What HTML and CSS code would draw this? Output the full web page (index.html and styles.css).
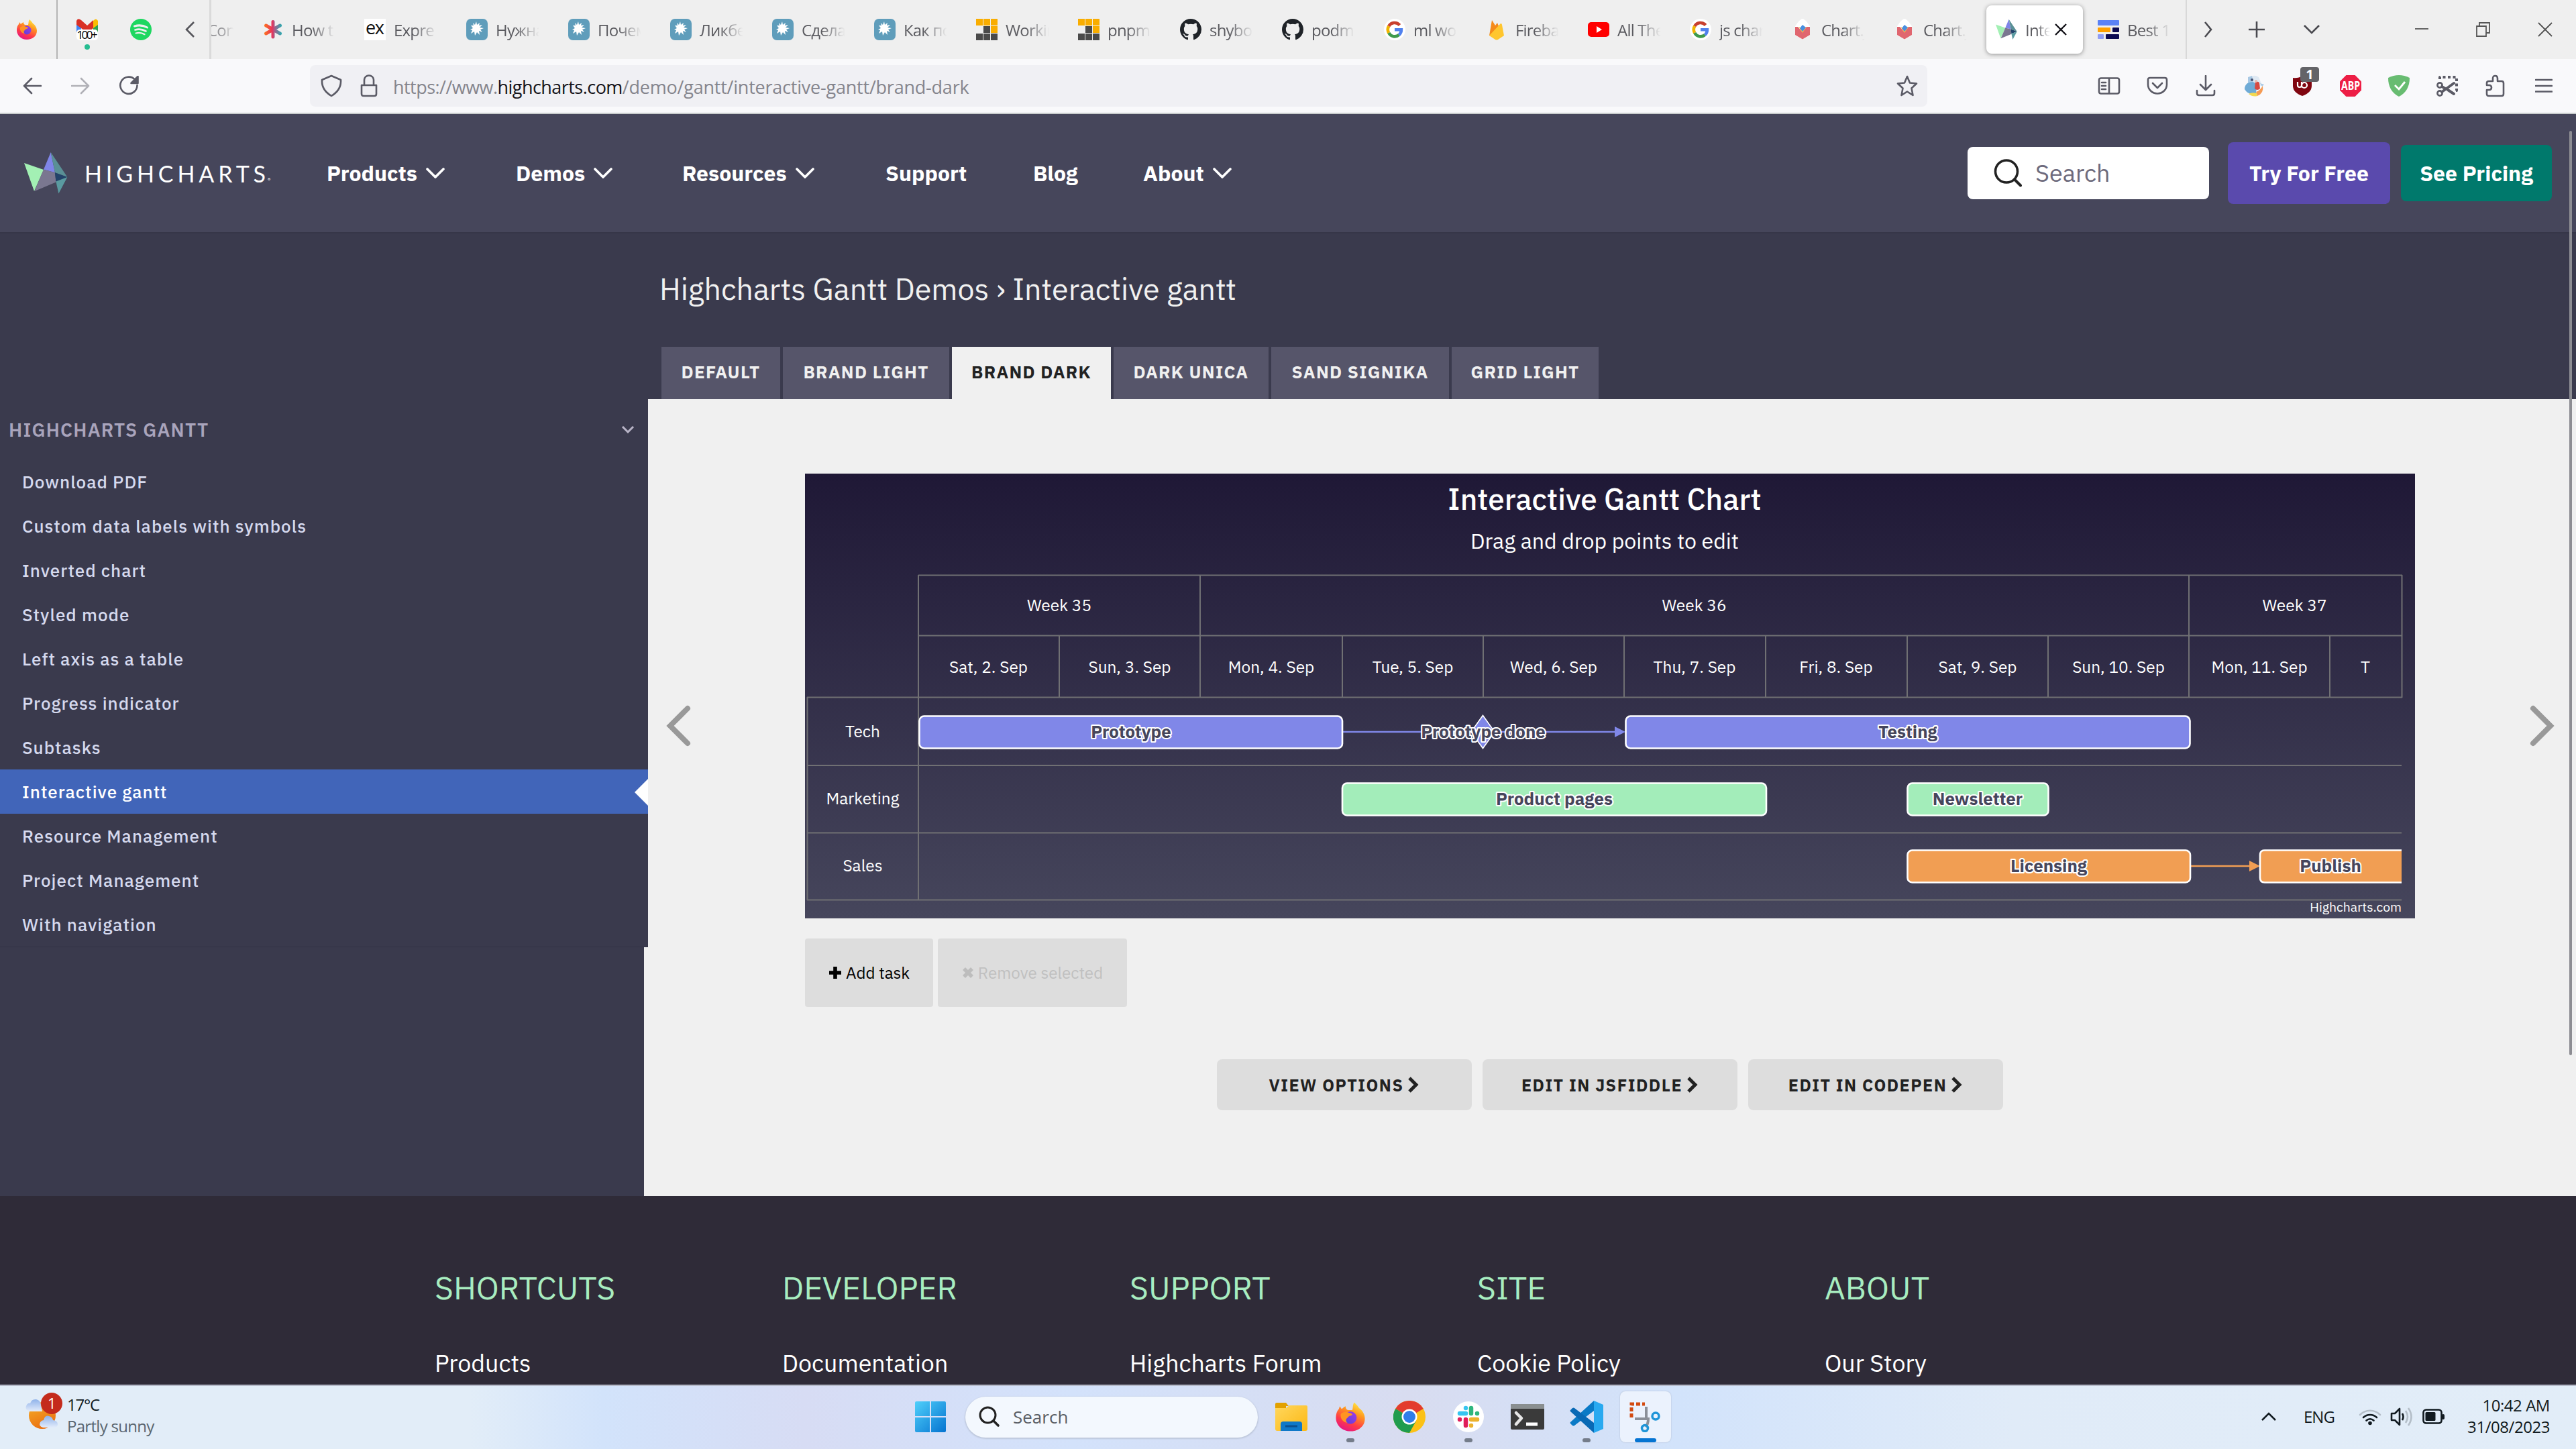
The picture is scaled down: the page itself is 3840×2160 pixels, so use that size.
FILE: index.html
```html
<!DOCTYPE html>
<html lang="en">
<head>
<meta charset="utf-8">
<title>Interactive gantt</title>
<link rel="stylesheet" href="styles.css">
</head>
<body>
<svg class="defs" aria-hidden="true">
  <defs>
    <linearGradient id="foxBody" x1="0.8" y1="0" x2="0.3" y2="1">
      <stop offset="0" stop-color="#fff14a"/><stop offset="0.35" stop-color="#ff9a1f"/><stop offset="0.7" stop-color="#ff3b47"/><stop offset="1" stop-color="#e31587"/>
    </linearGradient>
    <linearGradient id="foxGlobe" x1="0" y1="1" x2="1" y2="0">
      <stop offset="0" stop-color="#5a3fd6"/><stop offset="1" stop-color="#a23be8"/>
    </linearGradient>
    <linearGradient id="winFill" x1="0" y1="0" x2="1" y2="1">
      <stop offset="0" stop-color="#4fd0fb"/><stop offset="1" stop-color="#0573d0"/>
    </linearGradient>
    <linearGradient id="folderFill" x1="0" y1="0" x2="1" y2="1">
      <stop offset="0" stop-color="#ffd75e"/><stop offset="1" stop-color="#fcb813"/>
    </linearGradient>
    <linearGradient id="starFill" gradientUnits="userSpaceOnUse" x1="2" y1="0" x2="30" y2="0">
      <stop offset="0" stop-color="#ff7a1a"/><stop offset="0.45" stop-color="#e8335a"/><stop offset="0.6" stop-color="#a0608c"/><stop offset="1" stop-color="#1fb5b5"/>
    </linearGradient>
    <linearGradient id="sunFill" x1="0" y1="0" x2="0.4" y2="1">
      <stop offset="0" stop-color="#f6b02c"/><stop offset="1" stop-color="#ea7211"/>
    </linearGradient>
    <linearGradient id="cloudFill" x1="0" y1="0" x2="0" y2="1">
      <stop offset="0" stop-color="#8fb2ea"/><stop offset="1" stop-color="#e3ecfb"/>
    </linearGradient>
  </defs>
  <symbol id="firefox" viewBox="0 0 32 32">
    <path fill="url(#foxBody)" d="M20 1c2 2 4 4 5 6 3 2 6 6 6 11 0 8-7 13-15 13S1 25 1 17c0-4 1-7 3-9l1-3 2 3c1-1 2-2 4-3 0 2 1 4 3 4h4c1-3 0-5 2-8z"/>
    <circle cx="16" cy="17" r="6.500" fill="url(#foxGlobe)"/>
    <path fill="#ff9422" d="M6 13c3-3 7-2 9-1 2 0 3 1 3 2-2 1-4 1-5 3-2 1-2 4 0 5-4 0-8-4-7-9z"/>
  </symbol>
  <symbol id="habr" viewBox="0 0 32 32">
    <rect width="32" height="32" rx="7" fill="#5f9dbb"/>
    <path fill="#fff" d="M15 4l1 5 4-3-1 4 5-1-4 4 6 1-5 2 3 4-5-2 1 6-4-4-3 5-1-6-5 3 2-5-3-1 4-2-3-4 4 0-1-4 3 3z"/>
  </symbol>
  <symbol id="pnpm" viewBox="0 0 32 32">
    <path fill="#f9ad00" d="M0 0h10v10H0zM11 0h10v10H11zM22 0h10v10H22zM22 11h10v10H22z"/>
    <path fill="#4a4a4a" d="M11 11h10v10H11zM0 22h10v10H0zM11 22h10v10H11zM22 22h10v10H22z"/>
  </symbol>
  <symbol id="github" viewBox="0 0 16 16">
    <path fill="#1f2328" d="M8 0C3.58 0 0 3.58 0 8c0 3.54 2.29 6.53 5.47 7.59.4.07.55-.17.55-.38 0-.19-.01-.82-.01-1.49-2.01.37-2.53-.49-2.69-.94-.09-.23-.48-.94-.82-1.13-.28-.15-.68-.52-.01-.53.63-.01 1.08.58 1.23.82.72 1.21 1.87.87 2.33.66.07-.52.28-.87.51-1.07-1.78-.2-3.64-.89-3.64-3.95 0-.87.31-1.59.82-2.15-.08-.2-.36-1.02.08-2.12 0 0 .67-.21 2.2.82a7.6 7.6 0 0 1 4 0c1.53-1.04 2.2-.82 2.2-.82.44 1.1.16 1.92.08 2.12.51.56.82 1.27.82 2.15 0 3.07-1.87 3.75-3.65 3.95.29.25.54.73.54 1.48 0 1.07-.01 1.93-.01 2.2 0 .21.15.46.55.38A8 8 0 0 0 16 8c0-4.42-3.58-8-8-8z"/>
  </symbol>
  <symbol id="google" viewBox="0 0 32 32">
    <circle cx="16" cy="16" r="16" fill="#fff"/>
    <g fill="none" stroke-width="4.600">
      <path stroke="#c8402f" d="M23.500 9.500A10 10 0 0 0 7.200 11"/>
      <path stroke="#f0b400" d="M7.200 11a10 10 0 0 0 0 10"/>
      <path stroke="#3f9a4c" d="M7.200 21a10 10 0 0 0 15.300 3"/>
      <path stroke="#5081ee" d="M22.500 24a10 10 0 0 0 3.400-7.700H16"/>
    </g>
  </symbol>
  <symbol id="chartjs" viewBox="0 0 32 32">
    <path fill="#fff" d="M16-1l6 5 5 7v13l-11 7-11-7V11l5-7z"/>
    <path fill="#e0666f" d="M5 12h4l7 8 6-8h5v12l-11 6.500L5 24z"/>
    <path fill="#f6b53c" d="M10 12l6 9 6-9-3 1-3 2z"/>
    <path fill="#4a8fe0" d="M12 14l4-5 5 4-5 6z"/>
  </symbol>
  <symbol id="hcmark" viewBox="36 227 65 62">
    <path fill="#a3f0b4" d="M36 243l29 10-14 32z"/>
    <path fill="#7f85e8" d="M75.700 227L65 252.700l17 4.500z"/>
    <path fill="#5a9096" d="M75.700 227l24.700 37-18.400-6.800z"/>
    <path fill="#7a7790" d="M65 252.700l17 4.500 1.500 14.300L51.500 285z"/>
    <path fill="#22436a" d="M81.800 257.200l18.600 6.800-17 6.500z"/>
    <path fill="#5a9aa0" d="M100.400 264l-17 6.500 4 18z"/>
  </symbol>
  <symbol id="navchev" viewBox="0 0 30 18"><path fill="none" stroke="#fff" stroke-width="3.600" stroke-linecap="round" stroke-linejoin="round" d="M3 3l12 12L27 3"/></symbol>
  <symbol id="gochev" viewBox="0 0 18 24"><path fill="none" stroke="#222" stroke-width="5" d="M3 2l10 10L3 22"/></symbol>
</svg>

<div class="tabbar">
  <div class="pinned">
    <svg class="i32 pin-fox"><use href="#firefox"/></svg>
    <span class="pin-line"></span>
    <span class="pin-mail">
      <svg width="32" height="32" viewBox="0 0 32 32"><path fill="#4285f4" d="M0 6h7v20H0z"/><path fill="#2fa34f" d="M25 6h7v20h-7z"/><path fill="#fbbc04" d="M25 3q4-5 7 0v6l-7 5z"/><path fill="#d93025" d="M0 3q2-5 7-1l9 8 9-8v12l-9 7-9-7L0 9z"/><rect y="16" width="32" height="16" rx="5" fill="#fff"/><text x="16" y="30" text-anchor="middle" textLength="31" class="mailcount">100+</text></svg>
      <i class="mail-dot"></i>
    </span>
    <svg class="i32 pin-spot" viewBox="0 0 32 32"><circle cx="16" cy="16" r="16" fill="#1ed760"/><g fill="none" stroke="#efefef" stroke-linecap="round"><path stroke-width="3" d="M6.500 11q10-3 19 2"/><path stroke-width="2.600" d="M7.500 16.500q8-2.500 16 2"/><path stroke-width="2.200" d="M8.500 21.500q7-2 13 1.700"/></g></svg>
    <svg class="pin-prev" width="16" height="26" viewBox="0 0 16 26"><path fill="none" stroke="#55555b" stroke-width="2.600" d="M14 2L3 13l11 11"/></svg>
  </div>
  <div class="tabs">
    <div class="tab tab-cut"><span class="tab-label">Con</span></div>
    <div class="tab"><svg class="i32" viewBox="0 0 32 32"><g stroke="url(#starFill)" stroke-width="5" stroke-linecap="round"><path d="M16.010 4.500L16 27M5.500 10l21 12M5.500 22l21-12"/></g></svg><span class="tab-label">How t</span></div>
    <div class="tab"><svg class="i32" viewBox="0 0 32 32"><rect width="32" height="32" fill="#fff"/><text x="16" y="23" text-anchor="middle" textLength="28" class="exicon">ex</text></svg><span class="tab-label">Expre</span></div>
    <div class="tab"><svg class="i32"><use href="#habr"/></svg><span class="tab-label">Нужна</span></div>
    <div class="tab"><svg class="i32"><use href="#habr"/></svg><span class="tab-label">Почем</span></div>
    <div class="tab"><svg class="i32"><use href="#habr"/></svg><span class="tab-label">Ликбе</span></div>
    <div class="tab"><svg class="i32"><use href="#habr"/></svg><span class="tab-label">Сдела</span></div>
    <div class="tab"><svg class="i32"><use href="#habr"/></svg><span class="tab-label">Как по</span></div>
    <div class="tab"><svg class="i32"><use href="#pnpm"/></svg><span class="tab-label">Workin</span></div>
    <div class="tab"><svg class="i32"><use href="#pnpm"/></svg><span class="tab-label">pnpm</span></div>
    <div class="tab"><svg class="i32"><use href="#github"/></svg><span class="tab-label">shybo</span></div>
    <div class="tab"><svg class="i32"><use href="#github"/></svg><span class="tab-label">podm</span></div>
    <div class="tab"><svg class="i32"><use href="#google"/></svg><span class="tab-label">ml wo</span></div>
    <div class="tab"><svg class="i32" viewBox="0 0 32 32"><path fill="#f58a1a" d="M5 25L9 2l5 8 3-4 8 19z"/><path fill="#ffc62e" d="M5 25L22 7q2 0 2 2l3 16-9 6q-2 1-4 0z"/></svg><span class="tab-label">Fireba</span></div>
    <div class="tab"><svg class="i32" viewBox="0 0 32 32"><rect y="5" width="32" height="22" rx="5" fill="#f00"/><path fill="#fff" d="M13 11v10l8-5z"/></svg><span class="tab-label">All The</span></div>
    <div class="tab"><svg class="i32"><use href="#google"/></svg><span class="tab-label">js char</span></div>
    <div class="tab"><svg class="i32"><use href="#chartjs"/></svg><span class="tab-label">Chart.j</span></div>
    <div class="tab"><svg class="i32"><use href="#chartjs"/></svg><span class="tab-label">Chart.j</span></div>
    <div class="tab tab-active"><svg class="i32"><use href="#hcmark"/></svg><span class="tab-label">Inte</span><svg class="tab-x" viewBox="0 0 18 18"><path stroke="#15141a" stroke-width="2.400" d="M1 1l16 16M17 1L1 17"/></svg></div>
    <div class="tab"><svg class="i32" viewBox="0 0 32 32"><rect y="2" width="32" height="8" rx="1" fill="#5b82f5"/><rect y="13" width="19" height="7" rx="1" fill="#ffa000"/><rect x="22" y="13" width="10" height="7" rx="1" fill="#0c0a52"/><rect y="23" width="9" height="7" rx="1" fill="#8f9df5"/><rect x="12" y="23" width="20" height="7" rx="1" fill="#0c0a52"/></svg><span class="tab-label">Best 1</span></div>
  </div>
  <div class="winbtns">
    <svg width="14" height="26" viewBox="0 0 14 26"><path d="M2 2l9 11-9 11"/></svg>
    <svg width="26" height="26" viewBox="0 0 26 26"><path d="M13 1v24M1 13h24"/></svg>
    <svg width="26" height="16" viewBox="0 0 26 16"><path d="M2 2l11 11L24 2"/></svg>
    <span></span>
    <svg width="20" height="20" viewBox="0 0 20 20"><path class="thin" d="M0 9h20"/></svg>
    <svg width="22" height="22" viewBox="0 0 22 22"><path class="thin" d="M1 6h14v15H1zM5 6V1h15v15h-5"/></svg>
    <svg width="22" height="22" viewBox="0 0 22 22"><path class="thin" d="M1 1l20 20M21 1L1 21"/></svg>
  </div>
</div>

<div class="toolbar">
  <div class="navbtns">
    <svg width="28" height="26" viewBox="0 0 28 26"><path d="M27 13H2M13 2L2 13l11 11"/></svg>
    <svg class="off" width="28" height="26" viewBox="0 0 28 26"><path d="M1 13h25M15 2l11 11-11 11"/></svg>
    <svg width="30" height="30" viewBox="0 0 30 30"><path d="M24 5.500A12.600 12.600 0 1 0 27.500 14"/><path class="solid" d="M28.500 1v10h-10z"/></svg>
  </div>
  <div class="urlbar">
    <svg width="32" height="34" viewBox="0 0 32 34"><path d="M16 2L30 8q1 15-14 24Q1 23 2 8z"/></svg>
    <svg width="26" height="34" viewBox="0 0 26 34"><path d="M2 16h22v13q0 3-3 3H5q-3 0-3-3zM6 16V8a7 6.500 0 0 1 14 0v8"/></svg>
    <span class="url"><span>https://www.</span><b>highcharts.com</b><span class="url-path">/demo/gantt/interactive-gantt/brand-dark</span></span>
    <svg class="bookmark" width="32" height="32" viewBox="0 0 32 32"><path d="M16 2l4 9.500 10 1-7.500 7 2 10.500-8.500-5.500L7.500 30l2-10.500-7.500-7 10-1z"/></svg>
  </div>
  <div class="tools">
    <svg width="34" height="26" viewBox="0 0 34 26"><path d="M5 1.500h24q3 0 3 3v17q0 3-3 3H5q-3 0-3-3v-17q0-3 3-3zM17 2v22M6 8h6M6 13h6M6 18h6"/></svg>
    <svg width="32" height="28" viewBox="0 0 32 28"><path d="M5 2h22q3 0 3 3v7a14 13.500 0 0 1-28 0V5q0-3 3-3zM9 10l7 7 7-7"/></svg>
    <svg width="30" height="32" viewBox="0 0 30 32"><path d="M15 1v20M7 14l8 8 8-8M2 23v4q0 3 3 3h20q3 0 3-3v-4"/></svg>
    <svg class="plain" width="32" height="32" viewBox="0 0 32 32"><path fill="#dfe9f3" d="M12 2q6-3 11 1l5 12-8 3-12-6z"/><path fill="#6fabd6" d="M8 11q9-4 12 6l-1 10q-11 4-17-6 0-7 6-10z"/><path fill="#a9c9e4" d="M7 3l6-2 2 9-8 1zM25 12l6 2-3 3z"/><path fill="#d8483f" d="M18 11q5-3 6 1l1 8q-4 4-8 0z"/><path fill="#f59b54" d="M29 16q2 11-8 15l-2-6q6-2 10-9z"/><path fill="#f3d94f" d="M8 28q5-3 12-1l1 4q-7 2-13-3z"/><circle cx="13" cy="7" r="2" fill="#46506f"/><circle cx="19" cy="9" r="2" fill="#e8b9b0"/></svg>
    <span class="ublock"><svg class="plain" width="30" height="30" viewBox="0 0 30 30"><path fill="#800610" d="M1 3q8 1 14-3 6 4 14 3v12q0 10-14 15Q1 25 1 15z"/><path fill="none" stroke="#fff" stroke-width="2.200" d="M8 9v5q0 3 3 3t3-3V9M14 14a4 4 0 1 0 4-4q-3 0-4 4"/></svg><b>1</b></span>
    <svg class="plain" width="32" height="32" viewBox="0 0 32 32"><path fill="#ed1e45" d="M9.400 0h13.200L32 9.400v13.200L22.600 32H9.400L0 22.600V9.400z"/><text x="16" y="22" text-anchor="middle" textLength="28" lengthAdjust="spacingAndGlyphs" class="abp">ABP</text></svg>
    <svg class="plain" width="32" height="32" viewBox="0 0 32 32"><path fill="#68bc71" d="M16 0q8 0 16 4 0 20-16 28Q0 24 0 4q8-4 16-4z"/><path fill="none" stroke="#fff" stroke-width="2.800" d="M10 15l6 6 9-11"/></svg>
    <svg width="34" height="32" viewBox="0 0 34 32"><path class="dash" d="M6 6V3h25v20h-4"/><circle cx="6" cy="15" r="3.600"/><circle cx="6" cy="27" r="3.600"/><path class="fat" d="M9 25l18-13M9 17l5 3M18 22l9 6"/></svg>
    <svg width="30" height="34" viewBox="0 0 30 34"><path d="M5 10h6V6q0-4 3.500-4T18 6v4h6q3 0 3 3v16q0 3-3 3H5q-3 0-3-3v-6h3.500q3.500 0 3.500-3.500T5.500 16H2v-3q0-3 3-3z"/></svg>
    <svg width="26" height="22" viewBox="0 0 26 22"><path d="M1 2h24M1 11h24M1 19.500h24"/></svg>
  </div>
</div>

<header class="site-header">
  <div class="brand"><svg class="brand-mark"><use href="#hcmark"/></svg><span class="brand-name">HIGHCHARTS</span><small>®</small></div>
  <nav class="site-nav">
    <a>Products<svg><use href="#navchev"/></svg></a>
    <a>Demos<svg><use href="#navchev"/></svg></a>
    <a>Resources<svg><use href="#navchev"/></svg></a>
    <a>Support</a>
    <a>Blog</a>
    <a>About<svg><use href="#navchev"/></svg></a>
  </nav>
  <div class="site-cta">
    <div class="site-search"><svg width="42" height="42" viewBox="0 0 42 42"><circle cx="19" cy="18.500" r="16.500" fill="none" stroke="#222" stroke-width="3.600"/><path stroke="#222" stroke-width="4" stroke-linecap="round" d="M31 30.500l9 9"/></svg><span>Search</span></div>
    <a class="cta cta-try">Try For Free</a>
    <a class="cta cta-price">See Pricing</a>
  </div>
</header>

<main class="page">
  <aside class="sidebar">
    <div class="menu">
      <div class="menu-title"><span>HIGHCHARTS GANTT</span><svg width="20" height="12" viewBox="0 0 20 12"><path fill="none" stroke="#b9b5c8" stroke-width="3" d="M2 2l8 8 8-8"/></svg></div>
      <a class="item">Download PDF</a>
      <a class="item">Custom data labels with symbols</a>
      <a class="item">Inverted chart</a>
      <a class="item">Styled mode</a>
      <a class="item">Left axis as a table</a>
      <a class="item">Progress indicator</a>
      <a class="item">Subtasks</a>
      <a class="item current">Interactive gantt</a>
      <a class="item">Resource Management</a>
      <a class="item">Project Management</a>
      <a class="item">With navigation</a>
    </div>
  </aside>
  <section class="content">
    <div class="content-head">
      <h1>Highcharts Gantt Demos › Interactive gantt</h1>
      <div class="themes">
        <a class="t1">DEFAULT</a><a class="t2">BRAND LIGHT</a><a class="t3 on">BRAND DARK</a><a class="t4">DARK UNICA</a><a class="t5">SAND SIGNIKA</a><a class="t6">GRID LIGHT</a>
      </div>
    </div>
    <div class="demo">
      <svg class="arrow" width="37" height="62" viewBox="0 0 37 62"><path d="M32 5L6 31l26 26"/></svg>
      <svg class="gantt" width="2400" height="663" viewBox="1200 706 2400 663">
        <g class="head">
          <text x="2392" y="760" class="title">Interactive Gantt Chart</text>
          <text x="2392" y="818" class="subtitle">Drag and drop points to edit</text>
        </g>
        <path class="grid" d="M1369 857.500H3581M1369 947.500H3581M1203 1039.500H3581M1203 1141H3580M1203 1241.500H3580M1203 1341.500H3580M1369 857V1342M3580.500 857V1040M1203.500 1039V1342M1789 857V1039M3263 857V1039M1579 947V1039M2001 947V1039M2211 947V1039M2421 947V1039M2632 947V1039M2843 947V1039M3053 947V1039M3473 947V1039"/>
        <g class="axis">
          <text x="1579" y="911">Week 35</text><text x="2525.500" y="911">Week 36</text><text x="3420.500" y="911">Week 37</text>
          <text x="1473.500" y="1003">Sat, 2. Sep</text><text x="1684" y="1003">Sun, 3. Sep</text><text x="1895" y="1003">Mon, 4. Sep</text><text x="2106" y="1003">Tue, 5. Sep</text><text x="2316" y="1003">Wed, 6. Sep</text><text x="2526" y="1003">Thu, 7. Sep</text><text x="2737" y="1003">Fri, 8. Sep</text><text x="2948" y="1003">Sat, 9. Sep</text><text x="3158" y="1003">Sun, 10. Sep</text><text x="3368" y="1003">Mon, 11. Sep</text><text x="3526" y="1003">T</text>
          <text x="1286" y="1099">Tech</text><text x="1286" y="1199">Marketing</text><text x="1286" y="1299">Sales</text>
        </g>
        <path class="link tech" d="M2002 1091H2410"/><path class="tip tech" d="M2407 1083l16 8-16 8z"/>
        <path class="link sales" d="M3266 1291H3356"/><path class="tip sales" d="M3353 1283l16 8-16 8z"/>
        <g class="bars">
          <rect class="tech" x="1370.500" y="1067.500" width="630.500" height="48" rx="7"/>
          <rect class="tech" x="2423.500" y="1067.500" width="841" height="48" rx="7"/>
          <path class="tech thin" d="M2210.500 1066.500l17.500 24.500-17.500 24.500-17.500-24.500z"/>
          <rect class="mkt" x="2001" y="1167.500" width="632" height="48" rx="7"/>
          <rect class="mkt" x="2843.500" y="1167.500" width="210" height="48" rx="7"/>
          <rect class="sales" x="2843.500" y="1267.500" width="421.500" height="48" rx="7"/>
          <path class="sales" d="M3580 1315.500H3376q-7 0-7-7V1274.500q0-7 7-7H3580"/>
        </g>
        <g class="labels">
          <text x="1686" y="1100">Prototype</text><text x="2211" y="1100">Prototype done</text><text x="2844" y="1100">Testing</text><text x="2317" y="1200">Product pages</text><text x="2948" y="1200">Newsletter</text><text x="3054" y="1300">Licensing</text><text x="3474" y="1300">Publish</text>
        </g>
        <text x="3580" y="1359" class="credit">Highcharts.com</text>
      </svg>
      <svg class="arrow" width="37" height="62" viewBox="0 0 37 62"><path d="M5 5l26 26L5 57"/></svg>
    </div>
    <div class="edit">
      <button class="b-add"><svg width="20" height="20" viewBox="0 0 20 20"><path stroke="#000" stroke-width="5.600" d="M10 1v18M1 10h18"/></svg><span>Add task</span></button>
      <button class="b-rem"><svg width="18" height="18" viewBox="0 0 18 18"><path stroke="#bdbdbd" stroke-width="5.600" d="M3 3l12 12M15 3L3 15"/></svg><span>Remove selected</span></button>
    </div>
    <div class="actions">
      <a>VIEW OPTIONS<svg><use href="#gochev"/></svg></a>
      <a>EDIT IN JSFIDDLE<svg><use href="#gochev"/></svg></a>
      <a>EDIT IN CODEPEN<svg><use href="#gochev"/></svg></a>
    </div>
  </section>
</main>

<footer class="site-footer">
  <div><h3>SHORTCUTS</h3><a>Products</a></div>
  <div><h3>DEVELOPER</h3><a>Documentation</a></div>
  <div><h3>SUPPORT</h3><a>Highcharts Forum</a></div>
  <div><h3>SITE</h3><a>Cookie Policy</a></div>
  <div><h3>ABOUT</h3><a>Our Story</a></div>
</footer>

<div class="scrollthumb"></div>

<div class="taskbar">
  <div class="weather">
    <svg width="56" height="56" viewBox="0 0 56 56"><circle cx="25" cy="34" r="20" fill="url(#sunFill)"/><path fill="url(#cloudFill)" d="M6 28q-7-2-5-8 2-5 6-4 2-7 9-6 6 1 7 8l2 10z"/><path fill="url(#cloudFill)" d="M26 52q-7-2-4-8 2-3 5-3 2-8 8-6 5 1 6 6 7 1 7 6 0 5-5 5z"/><circle cx="39" cy="16" r="16" fill="#c42b1c"/><text x="39" y="24" text-anchor="middle" class="wbadge">1</text></svg>
    <div class="wtext"><span class="temp">17°C</span><span class="dim">Partly sunny</span></div>
  </div>
  <div class="dock">
    <div class="app start"><svg width="48" height="48" viewBox="0 0 48 48"><path fill="url(#winFill)" d="M3 1h20v22H1V3q0-2 2-2zM25 1h20q2 0 2 2v20H25zM1 25h22v22H3q-2 0-2-2zM25 25h22v20q0 2-2 2H25z"/></svg></div>
    <div class="dsearch"><svg width="32" height="32" viewBox="0 0 32 32"><circle cx="13.500" cy="13.500" r="11.500" fill="none" stroke="#222" stroke-width="3"/><path stroke="#222" stroke-width="3.600" stroke-linecap="round" d="M22 22l7 7"/></svg><span>Search</span></div>
    <div class="app"><svg width="48" height="44" viewBox="0 0 48 44"><path fill="#e2a100" d="M0 3q0-2 2-2h14l4 5h-4v6H0z"/><path fill="url(#folderFill)" d="M0 9h16l5-4h25q2 0 2 2v33q0 3-3 3H3q-3 0-3-3z"/><path fill="#0f78c8" d="M8 43V33q0-4 4-4h24q4 0 4 4v10z"/><path stroke="#0b4f8f" stroke-width="3" d="M15 36h18"/></svg></div>
    <div class="app run"><svg width="46" height="46"><use href="#firefox"/></svg></div>
    <div class="app"><svg width="48" height="48" viewBox="0 0 48 48"><circle cx="24" cy="24" r="24" fill="#fbc116"/><path fill="#e33b2e" d="M24 24L3.200 12A24 24 0 0 1 44.800 12z"/><path fill="#1f9c4d" d="M24 24L3.200 12A24 24 0 0 0 24 48l10-18z"/><circle cx="24" cy="24" r="11.500" fill="#fff"/><circle cx="24" cy="24" r="9" fill="#2f7de9"/></svg></div>
    <div class="app run"><svg width="48" height="48" viewBox="0 0 48 48"><circle cx="24" cy="24" r="23" fill="#fff"/><g stroke-width="6.500" stroke-linecap="round"><path stroke="#36c5f0" d="M20 11v0M20 19H11"/><path stroke="#2eb67d" d="M28 11v8M37 19v0"/><path stroke="#ecb22e" d="M28 28h9M28 37v0"/><path stroke="#e01e5a" d="M20 28v9M11 28v0"/></g></svg></div>
    <div class="app"><svg width="50" height="38" viewBox="0 0 50 38"><path fill="#3a3a3a" d="M2 0h46q2 0 2 2v34q0 2-2 2H2q-2 0-2-2V2q0-2 2-2z"/><path fill="#8a8f90" d="M2 0h46q2 0 2 2v5H0V2q0-2 2-2z"/><path fill="none" stroke="#e6e6e6" stroke-width="4.500" stroke-linecap="round" stroke-linejoin="round" d="M8 13l8 8-8 9"/><path stroke="#fff" stroke-width="5" d="M23 30h17"/></svg></div>
    <div class="app run"><svg width="50" height="48" viewBox="0 0 50 48"><path fill="#29a9f0" d="M36 0l14 6v36l-14 6z"/><path fill="#0a7ac6" d="M36 0v15L7 37q-1 1-3 0l-3-3q-1-1 0-2z"/><path fill="#0869b5" d="M36 48V33L7 11q-1-1-3 0l-3 3q-1 1 0 2z"/></svg></div>
    <div class="app front"><svg width="48" height="46" viewBox="0 0 48 46"><path fill="none" stroke="#d34a10" stroke-width="5" stroke-dasharray="6 3" d="M3 24V4h20"/><path fill="none" stroke="#8b9099" stroke-width="4" d="M8 26h20q0 8-4 12M25 8v20"/><circle cx="39" cy="22" r="5" fill="none" stroke="#1f95d8" stroke-width="3.500"/><circle cx="23" cy="40" r="4.500" fill="none" stroke="#1f95d8" stroke-width="3.500"/></svg></div>
  </div>
  <div class="tray">
    <svg width="24" height="14" viewBox="0 0 24 14"><path fill="none" stroke="#111a20" stroke-width="2.600" d="M2 12L12 2l10 10"/></svg>
    <span class="lang">ENG</span>
    <svg class="wifi" width="34" height="28" viewBox="0 0 34 28"><g fill="none" stroke="#111a20" stroke-width="2.600" stroke-linecap="round"><path stroke="#b4bec8" d="M2 11a21 21 0 0 1 30 0"/><path d="M7 15a14.500 14.500 0 0 1 20 0"/><path d="M11.500 19.500a8 8 0 0 1 11 0"/></g><circle cx="17" cy="23.500" r="2.800" fill="#111a20"/></svg>
    <svg class="vol" width="34" height="32" viewBox="0 0 34 32"><g fill="none" stroke="#111a20" stroke-width="2.600" stroke-linejoin="round"><path d="M2 11h5l7-7v24l-7-7H2z"/><path d="M18 11q3 5 0 10"/><path stroke="#b4bec8" d="M23 7q6 9 0 18M27 3q9 13 0 26"/></g></svg>
    <svg class="bat" width="34" height="24" viewBox="0 0 34 24"><rect x="1.500" y="1.500" width="27" height="20" rx="4" fill="none" stroke="#111a20" stroke-width="2.600"/><rect x="4.500" y="5" width="15" height="13" rx="1.500" fill="#111a20"/><path stroke="#111a20" stroke-width="4" stroke-linecap="round" d="M31 10v4"/></svg>
    <div class="clock"><span>10:42 AM</span><span>31/08/2023</span></div>
  </div>
</div>
</body>
</html>
```
FILE: styles.css
```css
* { box-sizing: border-box; }
body { margin: 0; width: 3840px; height: 2160px; overflow: hidden; position: relative; background: #3a3a4d; font-family: "IBM Plex Sans", Roboto, sans-serif; display: flex; flex-direction: column; }
svg { display: block; flex: none; }
h1, h3 { margin: 0; font-weight: 400; }
span, a, b, h1, h3 { white-space: nowrap; }
.defs { position: absolute; width: 0; height: 0; }
.i32 { width: 32px; height: 32px; }

/* browser tabs */
.tabbar { height: 88px; flex: none; display: flex; background: #efefef; font: 24px/36px "Segoe UI", "Open Sans", sans-serif; color: #5b5b60; }
.pinned { width: 315px; display: flex; align-items: center; border-right: 3px solid #dadada; flex: none; }
.pin-fox { margin-left: 24px; }
.pin-line { width: 2px; height: 88px; margin-left: 28px; background: #b5b5b5; }
.pin-mail { position: relative; margin-left: 28px; }
.mail-dot { position: absolute; left: 12px; top: 38px; width: 8px; height: 8px; border-radius: 50%; background: #26bd91; }
.mailcount { font: 17px "Open Sans", sans-serif; fill: #000; }
.pin-spot { margin-left: 48px; }
.pin-prev { margin-left: 49px; }
.exicon { font: 27px "Open Sans", sans-serif; fill: #111; }
.tabs { flex: none; width: 2945px; display: flex; overflow: hidden; border-right: 2px solid #d8d8d8; }
.tab { width: 152px; flex: none; display: flex; align-items: center; padding-left: 14px; gap: 12px; }
.tab-label { width: 66px; overflow: hidden; padding-top: 2px; letter-spacing: -0.8px; -webkit-mask-image: linear-gradient(90deg, #000 45%, transparent 98%); mask-image: linear-gradient(90deg, #000 45%, transparent 98%); }
.tab-cut { width: 62px; padding-left: 0; opacity: .6; }
.tab-cut .tab-label { width: 34px; text-indent: -6px; }
.tab-active { width: 144px; height: 72px; margin: 8px 8px 0 0; background: #fff; border-radius: 8px; box-shadow: 0 1px 6px rgba(0, 0, 0, .4); }
.tab-active .tab-label { width: 38px; }
.tab-x { width: 18px; height: 18px; margin-left: -6px; }
.winbtns { flex: 1; display: grid; grid-template-columns: 64px 80px 84px 76px 92px 92px 92px; align-items: center; justify-items: center; }
.winbtns path { fill: none; stroke: #4a4a50; stroke-width: 2.6; }
.winbtns .thin { stroke-width: 1.8; stroke: #555; }

/* address bar */
.toolbar { height: 82px; flex: none; display: flex; align-items: center; background: #f9f9fb; border-bottom: 2px solid #c9cdcd; }
.toolbar svg:not(.plain) path, .toolbar svg:not(.plain) circle { fill: none; stroke: #5b5b66; stroke-width: 2.6; stroke-linejoin: round; stroke-linecap: round; }
.toolbar svg:not(.plain) .solid { fill: #5b5b66; }
.toolbar .off { opacity: .45; }
.toolbar svg:not(.plain) .dash { stroke-width: 4; stroke-dasharray: 4 3.5; stroke-linecap: butt; }
.toolbar svg:not(.plain) .fat { stroke-width: 4; }
.navbtns { width: 462px; display: flex; align-items: center; padding-left: 34px; gap: 44px; }
.navbtns svg + svg + svg { margin-left: -1px; }
.urlbar { width: 2411px; height: 62px; display: flex; align-items: center; background: #f0f0f4; border-radius: 8px; padding-left: 16px; }
.urlbar svg + svg { margin-left: 27px; }
.url { margin-left: 23px; padding-top: 3px; font: 27px/40px "Segoe UI", "Open Sans", sans-serif; color: #85858d; display: flex; letter-spacing: -0.54px; }
.url b { font-weight: 400; color: #15141a; }
.url .url-path { letter-spacing: -0.22px; }
.urlbar .bookmark { margin-left: auto; margin-right: 14px; }
.tools { margin-left: 235px; display: grid; grid-template-columns: repeat(10, 72px); justify-items: center; align-items: center; }
.ublock { position: relative; }
.ublock b { position: absolute; left: 12px; top: -13px; width: 28px; height: 22px; border-radius: 4px; background: #646468; color: #fff; font: 700 20px/22px "Open Sans", sans-serif; text-align: center; }
.abp { font: 700 17px "Open Sans", sans-serif; fill: #fff; }

/* site header */
.site-header { height: 178px; flex: none; display: flex; align-items: center; background: #46465b; border-bottom: 2px solid #363648; color: #fff; font-weight: 700; font-size: 32px; line-height: 40px; }
.brand { width: 487px; display: flex; align-items: center; padding-left: 36px; flex: none; }
.brand-mark { width: 65px; height: 62px; }
.brand-name { font: 400 34px/40px Lato, sans-serif; margin-left: 25px; letter-spacing: 5.9px; padding-top: 2px; }
.brand small { font-size: 9px; margin: 22px 0 0 -3px; }
.site-nav { display: grid; grid-template-columns: 282px 248px 303px 220px 164px 200px; flex: 1; }
.site-nav a { display: flex; align-items: center; gap: 12px; }
.site-nav svg { width: 30px; height: 18px; }
.site-cta { display: flex; align-items: center; padding-right: 36px; }
.site-search { width: 360px; height: 78px; border-radius: 8px; background: #fff; color: #6d6a7c; font-weight: 400; font-size: 36px; display: flex; align-items: center; padding-left: 39px; gap: 20px; margin-right: 28px; }
.cta { display: flex; align-items: center; justify-content: center; border-radius: 8px; }
.cta-try { width: 242px; height: 92px; background: #5a4aad; margin-right: 16px; }
.cta-price { width: 225px; height: 84px; background: #00796c; }

/* page */
.page { height: 1435px; flex: none; display: grid; grid-template-columns: 960px 1fr; }
.sidebar { background: #3a3a4d; padding-top: 247px; }
.menu { position: relative; z-index: 1; width: 966px; background: #3a3a4d; box-shadow: 0 1px 0 #333345; }
.menu-title { height: 90px; display: flex; align-items: center; justify-content: space-between; padding: 0 20px 0 13px; color: #a9a4bc; font-size: 28px; font-weight: 600; letter-spacing: 1.25px; }
.item { height: 66px; padding-left: 33px; display: flex; align-items: center; color: #d5d9ee; font-size: 26px; font-weight: 500; letter-spacing: 1.03px; }
.current { position: relative; background: #4165b9; color: #fff; }
.current::after { content: ""; position: absolute; right: 0; top: 14px; border: 20px solid transparent; border-left-width: 0; border-right: 20px solid #fff; }
.content { background: #f0f0f0; }
.content-head { height: 247px; background: #3a3a4d; padding-left: 26px; display: flex; flex-direction: column; justify-content: space-between; color: #f0f0f0; }
.content-head h1 { font-size: 44.8px; line-height: 60px; margin: 52px 0 0 -3px; }
.themes { display: flex; gap: 4px; }
.themes a { height: 78px; padding-bottom: 4px; display: flex; align-items: center; justify-content: center; background: #56556a; font-size: 26px; font-weight: 700; letter-spacing: 1.25px; color: #f0f0f0; }
.themes .on { background: #f0f0f0; color: #222; }
.t1 { width: 177px; } .t2 { width: 248px; } .t3 { width: 237px; } .t4 { width: 231px; } .t5 { width: 265px; } .t6 { width: 219px; }
.demo { margin-top: 111px; display: grid; grid-template-columns: 240px 2400px 240px; align-items: center; }
.arrow { margin: 88px 0 0 33px; }
.gantt + .arrow { margin: 88px 32px 0 auto; }
.arrow path { fill: none; stroke: #999; stroke-width: 8; stroke-linecap: round; }

/* chart */
.gantt { background: linear-gradient(#1f1836, #46465c); }
.gantt text { fill: #fff; text-anchor: middle; }
.gantt .title { font-size: 44.2px; font-weight: 500; }
.gantt .subtitle { font-size: 32.100px; }
.gantt .grid { fill: none; stroke: #707073; stroke-width: 2; }
.gantt .axis { font-size: 24.400px; }
.tech { fill: #8087e8; stroke: #8087e8; }
.mkt { fill: #a3edba; }
.sales { fill: #f19e53; stroke: #f19e53; }
.link { stroke-width: 2.5; }
.tip { stroke: none; }
.bars > * { stroke: #fff; stroke-width: 2.6; }
.bars .thin { stroke-width: 1.6; }
.gantt .labels text { font-size: 25.800px; font-weight: 700; fill: #46465c; stroke: #fff; stroke-width: 4.200px; paint-order: stroke; stroke-linejoin: round; }
.gantt .credit { font-size: 19.400px; text-anchor: end; }

.edit { margin: 30px 0 0 240px; display: flex; gap: 7px; }
.edit button { height: 102px; border: 0; border-radius: 4px; background: #ddd; font: 24.200px/30px "IBM Plex Sans", Roboto, sans-serif; color: #000; display: flex; align-items: center; justify-content: center; gap: 6px; padding: 0; }
.b-add { width: 191px; }
.edit .b-rem { width: 282px; color: #c0c0c0; }
.actions { margin-top: 78px; display: flex; justify-content: center; gap: 16px; }
.actions a { width: 380px; height: 76px; border-radius: 8px; background: #ddd; color: #222; font-size: 25px; font-weight: 700; letter-spacing: 1.45px; display: flex; align-items: center; justify-content: center; gap: 6px; }
.actions svg { width: 18px; height: 24px; }

/* footer */
.site-footer { height: 281px; flex: none; background: #2f2b38; padding: 104px 0 0 648px; display: grid; grid-template-columns: repeat(5, 518px); }
.site-footer h3 { color: #a8edc0; font-size: 48px; line-height: 64px; }
.site-footer a { display: block; color: #fff; font-size: 35.800px; line-height: 50px; margin-top: 56px; }
.scrollthumb { position: absolute; left: 3830px; top: 195px; width: 4px; height: 1378px; border-radius: 2px; background: #8d8d93; }

/* taskbar */
.taskbar { height: 96px; flex: none; border-top: 2px solid #b6bac9; padding-bottom: 2px; display: flex; justify-content: space-between; align-items: center; position: relative; background: linear-gradient(90deg, #e2edf8 0, #e2edf8 700px, #d2e3fb 900px, #d7dcf4 1200px, #d3e2fb 1600px, #d8dcf0 2100px, #d2e3fb 2500px, #e0ebf8 3000px, #e2edf8 100%); font: 24px/32px "Segoe UI", "Open Sans", sans-serif; letter-spacing: -0.45px; color: #111a20; }
.weather { width: 1343px; display: flex; padding-left: 38px; gap: 6px; margin-top: -16px; align-items: flex-end; }
.wbadge { font: 22px "Open Sans", sans-serif; fill: #fff; }
.wtext { display: flex; flex-direction: column; margin-bottom: -10px; }
.temp { letter-spacing: -1.2px; }
.dim { color: #5a6670; letter-spacing: -0.7px; }
.dock { flex: 1; display: flex; align-items: center; }
.app { position: relative; width: 88px; height: 76px; display: flex; align-items: center; justify-content: center; flex: none; }
.run::after, .front::after { content: ""; position: absolute; bottom: 0; left: 38px; width: 12px; height: 6px; border-radius: 3px; background: #747c8a; }
.front::after { left: 22px; width: 32px; background: #0574d2; }
.front { width: 76px; margin-left: 6px; background: #ebf2fd; border-radius: 8px; box-shadow: 0 0 2px #a9b4c8; }
.dsearch { width: 436px; height: 61px; margin: 0 6px 0 8px; border-radius: 31px; background: #f3f8fe; box-shadow: 0 1px 2px 1px #bcc6da; display: flex; align-items: center; padding-left: 20px; gap: 19px; font-size: 26px; letter-spacing: 0; color: #5a5f66; }
.tray { width: 470px; display: flex; align-items: center; flex: none; padding-right: 39px; }
.lang { margin-left: 40px; letter-spacing: -1px; }
.wifi { margin-left: 36px; }
.vol { margin-left: 13px; }
.bat { margin-left: 14px; }
.clock { display: flex; flex-direction: column; align-items: flex-end; margin-left: auto; margin-top: -3px; }
```
